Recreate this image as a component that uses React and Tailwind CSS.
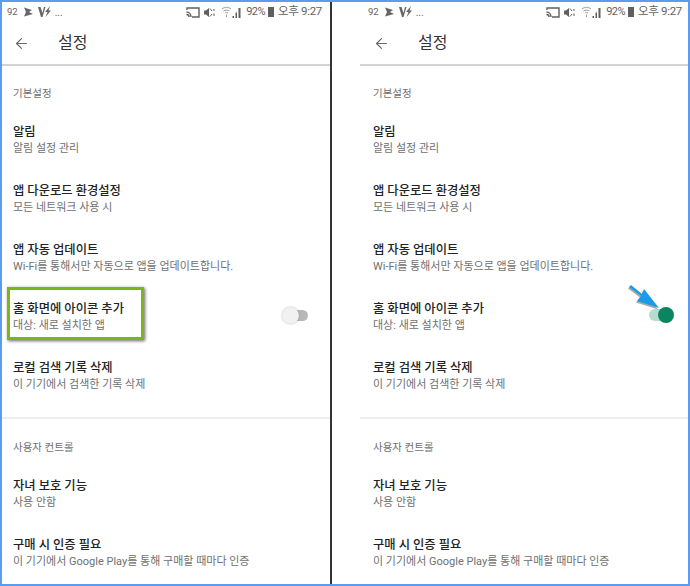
import { ArrowLeft } from "lucide-react";

const font = { fontFamily: '"Roboto", "Noto Sans CJK KR", sans-serif' };

function StatusBar({ left }) {
    return (
        <div className={`h-[20px] flex items-center justify-between text-[#5f5f5f] ${left}`}>
            <div className="flex items-center gap-[5px] text-[9.500px]">
                <span>92</span>
                <svg width="10" height="10" viewBox="0 0 10 10" fill="#666">
                    <path d="M1 0.500 L9 3 L6 5 L10 7 L1 9.500 L3 5 Z" />
                </svg>
                <svg width="13" height="12" viewBox="0 0 13 12" fill="#666">
                    <path d="M0 1 L2.500 1 L4.500 7 L6 1 L7.500 1 L4.500 11 L3 11 Z" />
                    <path d="M12 0 L7 6 L9.500 6 L7.500 11 L13 4.500 L10.500 4.500 Z" />
                </svg>
                <span className="text-[10px] -ml-[1px]">...</span>
            </div>
            <div className="flex items-center text-[11.500px]">
                <svg width="14" height="11" viewBox="0 0 14 11" fill="none" stroke="#5f5f5f" strokeWidth="1.400">
                    <path d="M1 3 V1 H13 V10 H6" />
                    <path d="M0.500 5 C3 5 5 7 5 10 M0.500 7.500 C2 7.500 3 8.500 3 10" />
                </svg>
                <svg width="11" height="11" viewBox="0 0 11 11" fill="#5f5f5f" className="ml-[4px]">
                    <path d="M0 3.500 H2 L5 1 V10 L2 7.500 H0 Z" />
                    <path d="M6 1.500 L8 4 M8 7 L6 9.500" stroke="#5f5f5f" />
                    <path d="M10 2 V4 M10 6.500 V9" stroke="#5f5f5f" />
                </svg>
                <svg width="11" height="12" viewBox="0 0 11 12" fill="none" stroke="#999" className="ml-[6px]">
                    <path d="M1 3 C3.500 0.800 7.500 0.800 10 3 M2.500 5 C4 3.800 7 3.800 8.500 5 M4 7 C5 6.400 6 6.400 7 7 M5.500 8.500 V11" />
                </svg>
                <svg width="10" height="11" viewBox="0 0 10 11" fill="#5f5f5f">
                    <path d="M0.500 9 H2 V11 H0.500 Z M3.500 5.500 H5 V11 H3.500 Z M6.500 1 H8.500 V11 H6.500 Z" />
                </svg>
                <span className="ml-[4px] text-[11px] tracking-[-0.6px]">92%</span>
                <div className="ml-[3px] w-[6px] h-[10px] bg-[#5f5f5f]" />
                <span className="ml-[4px] tracking-[-0.3px]">오후 9:27</span>
            </div>
        </div>
    );
}

function Row({ title, sub, inset, children }) {
    return (
        <div className={`relative h-[59px] pt-[10px] ${inset}`}>
            <div className="text-[12.300px] leading-[17px] font-medium text-[#222]">{title}</div>
            <div className="text-[11px] leading-[16px] text-[#707070]">{sub}</div>
            {children}
        </div>
    );
}

function SectionTitle({ inset, children }) {
    return <div className={`text-[10.500px] leading-[14px] text-[#707070] ${inset}`}>{children}</div>;
}

function Panel({ on, className, statusPad, inset }) {
    return (
        <div className={`h-full bg-white ${className}`}>
            <StatusBar left={statusPad} />
            <div className={`h-[42px] flex items-center ${inset}`}>
                <ArrowLeft size={17} strokeWidth={1.500} className="text-[#666]" />
                <span className="ml-[28px] text-[16px] text-[#333]">설정</span>
            </div>
            <div className="h-[2px] bg-[#d4d4d4]" />
            <div className="pt-[21px]">
                <SectionTitle inset={inset}>기본설정</SectionTitle>
                <div className="h-[13px]" />
                <Row inset={inset} title="알림" sub="알림 설정 관리" />
                <Row inset={inset} title="앱 다운로드 환경설정" sub="모든 네트워크 사용 시" />
                <Row inset={inset} title="앱 자동 업데이트" sub="Wi-Fi를 통해서만 자동으로 앱을 업데이트합니다." />
                <Row inset={inset} title="홈 화면에 아이콘 추가" sub="대상: 새로 설치한 앱">
                    {on ? (
                        <>
                            <div className="absolute right-[18px] top-[18px] w-[21px] h-[12px] rounded-full bg-[#b5dccd]" />
                            <div className="absolute right-[14px] top-[16px] w-[16px] h-[16px] rounded-full bg-[#0a8560]" />
                            <svg width="36" height="36" viewBox="0 0 36 36" className="absolute left-[266px] top-[-7px]">
                                <path d="M3 3 L5 1 L16 10 L18 5 L33 24 L11 17 L15 12 Z" fill="#555" opacity="0.5" transform="translate(-1 1.500)" />
                                <path d="M3 3 L5 1 L16 10 L18 5 L33 24 L11 17 L15 12 Z" fill="#1a9ce8" />
                            </svg>
                        </>
                    ) : (
                        <>
                            <div className="absolute left-[281px] top-[19px] w-[25px] h-[11px] rounded-full bg-[#b8b8b8]" />
                            <div className="absolute left-[280px] top-[16px] w-[17px] h-[17px] rounded-full bg-[#f1f1f1] shadow-[0_0_2px_rgba(0,0,0,0.3)]" />
                            <div className="absolute left-[5px] top-[-4px] w-[137px] h-[53px] border-[3px] border-[#7cb518] shadow-[1px_1px_3px_rgba(0,0,0,0.6)]" />
                        </>
                    )}
                </Row>
                <Row inset={inset} title="로컬 검색 기록 삭제" sub="이 기기에서 검색한 기록 삭제" />
                <div className="h-[8px]" />
                <div className="h-[2px] bg-[#eeeeee]" />
                <div className="h-[22px]" />
                <SectionTitle inset={inset}>사용자 컨트롤</SectionTitle>
                <div className="h-[13px]" />
                <Row inset={inset} title="자녀 보호 기능" sub="사용 안함" />
                <Row inset={inset} title="구매 시 인증 필요" sub="이 기기에서 Google Play를 통해 구매할 때마다 인증" />
            </div>
        </div>
    );
}

export default function App() {
    return (
        <div style={font} className="w-[690px] h-[586px] overflow-hidden border-2 border-[#5b9bf0] bg-white flex">
            <Panel className="w-[330px] border-r-2 border-[#333]" statusPad="pl-[5px] pr-[8px]" inset="pl-[11px]" />
            <div className="w-[28px]" />
            <Panel on className="flex-1" statusPad="pl-[8px] pr-[6px]" inset="pl-[13px]" />
        </div>
    );
}
